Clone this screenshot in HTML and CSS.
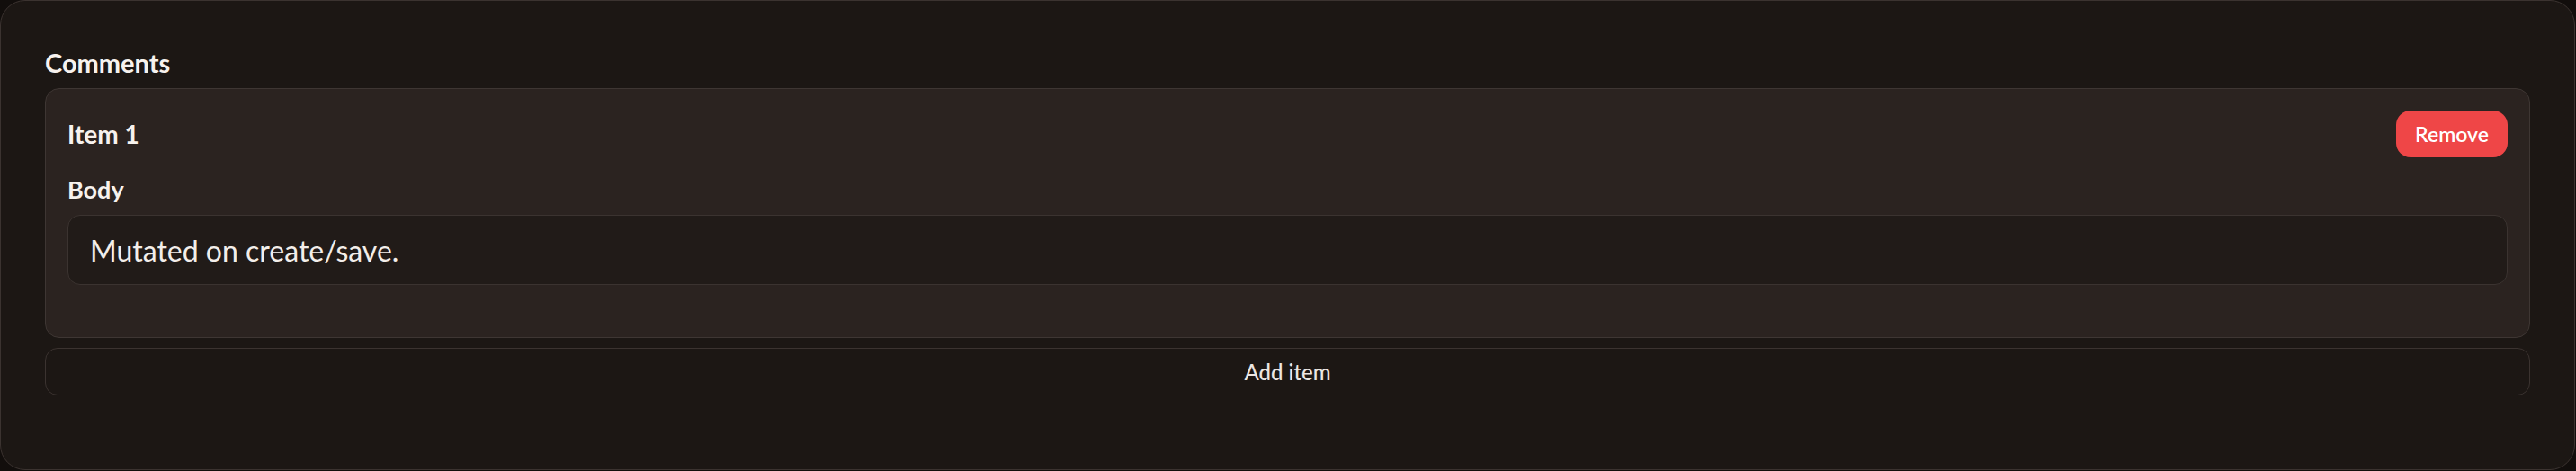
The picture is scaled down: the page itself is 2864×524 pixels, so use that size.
FILE: index.html
```html
<!DOCTYPE html>
<html lang="en">
<head>
<meta charset="utf-8">
<title>Comments</title>
<link rel="stylesheet" href="styles.css">
</head>
<body>
  <section class="panel">
    <h2 class="panel-title">Comments</h2>
    <div class="item-card">
      <div class="item-header">
        <h3 class="item-title">Item 1</h3>
        <button class="btn-remove" type="button">Remove</button>
      </div>
      <div class="field">
        <label class="field-label">Body</label>
        <div class="field-input">Mutated on create/save.</div>
      </div>
    </div>
    <button class="btn-add" type="button">Add item</button>
  </section>
</body>
</html>
```

FILE: styles.css
```css
html, body {
  margin: 0;
  padding: 0;
  background: #120e0c;
}
body {
  font-family: Lato, "Noto Sans", sans-serif;
  color: #f5f0ec;
  width: 2864px;
  height: 524px;
}
.panel {
  box-sizing: border-box;
  width: 2863px;
  height: 523px;
  background: #1c1714;
  border: 1px solid #3b3330;
  border-radius: 28px;
  padding: 49px 49px 49px 49px;
  display: flex;
  flex-direction: column;
}
.panel-title {
  margin: 0 0 8px 0;
  font-size: 29px;
  line-height: 40px;
  font-weight: 700;
  color: #f7f2ee;
}
.item-card {
  background: #2b2320;
  border: 1px solid #3e3633;
  border-radius: 16px;
  padding: 24px 24px 24px 24px;
  display: flex;
  flex-direction: column;
  gap: 16px;
}
.item-header {
  display: flex;
  align-items: center;
  justify-content: space-between;
}
.item-title {
  margin: 0;
  font-size: 28px;
  line-height: 40px;
  font-weight: 700;
  color: #f7f2ee;
}
.btn-remove {
  width: 124px;
  height: 52px;
  border: none;
  border-radius: 16px;
  background: #ef4647;
  color: #ffffff;
  font-family: inherit;
  font-size: 23px;
  font-weight: 600;
  padding: 0;
}
.field {
  display: flex;
  flex-direction: column;
  gap: 8px;
  margin-bottom: 34px;
}
.field-label {
  font-size: 27px;
  line-height: 40px;
  font-weight: 700;
  color: #f7f2ee;
}
.field-input {
  box-sizing: border-box;
  height: 78px;
  background: #211b18;
  border: 1px solid #3b3330;
  border-radius: 14px;
  padding: 0 24px;
  display: flex;
  align-items: center;
  font-size: 32px;
  color: #f3eeea;
}
.btn-add {
  margin-top: 11px;
  height: 53px;
  background: #1c1714;
  border: 1px solid #3b3330;
  border-radius: 14px;
  color: #ece6e2;
  font-family: inherit;
  font-size: 24px;
  font-weight: 500;
  padding: 0;
}
```
